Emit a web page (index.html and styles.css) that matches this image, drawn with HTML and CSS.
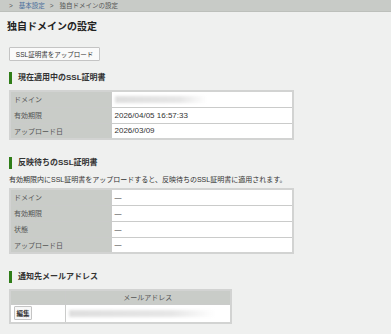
FILE: index.html
```html
<!DOCTYPE html>
<html lang="ja">
<head>
    <meta charset="UTF-8">
    <meta name="viewport" content="width=device-width, initial-scale=1.0">
    <title>独自ドメインの設定</title>
    <link rel="stylesheet" href="styles.css">
</head>
<body>

    <!-- パンくず -->
    <div class="breadcrumb">
        <span class="sep">&gt;</span><a href="#">基本設定</a><span class="sep">&gt;</span>独自ドメインの設定
    </div>

    <div class="content">
        <h1>独自ドメインの設定</h1>

        <button class="btn">SSL証明書をアップロード</button>

        <!-- 現在の証明書 -->
        <h3>現在適用中のSSL証明書</h3>
        <table class="info">
            <tr>
                <th>ドメイン</th>
                <td><span class="masked domain"></span></td>
            </tr>
            <tr>
                <th>有効期限</th>
                <td class="num">2026/04/05 16:57:33</td>
            </tr>
            <tr>
                <th>アップロード日</th>
                <td class="num">2026/03/09</td>
            </tr>
        </table>

        <!-- 反映待ち -->
        <h3 class="second">反映待ちのSSL証明書</h3>
        <p class="note">有効期限内にSSL証明書をアップロードすると、反映待ちのSSL証明書に適用されます。</p>
        <table class="info">
            <tr>
                <th>ドメイン</th>
                <td>—</td>
            </tr>
            <tr>
                <th>有効期限</th>
                <td>—</td>
            </tr>
            <tr>
                <th>状態</th>
                <td>—</td>
            </tr>
            <tr>
                <th>アップロード日</th>
                <td>—</td>
            </tr>
        </table>

        <!-- 通知先 -->
        <h3 class="second">通知先メールアドレス</h3>
        <table class="mail">
            <tr>
                <th class="col-edit"></th>
                <th>メールアドレス</th>
            </tr>
            <tr>
                <td><button class="btn small">編集</button></td>
                <td><span class="masked email"></span></td>
            </tr>
        </table>
    </div>

</body>
</html>
```

FILE: styles.css
```css
* {
    margin: 0;
    padding: 0;
    box-sizing: border-box;
    font-family: "Liberation Sans", "Noto Sans CJK JP", sans-serif;
}
body {
    background: #eff0ef;
    color: #333;
    font-size: 7px;
}
.breadcrumb {
    height: 12px;
    line-height: 11px;
    background: #c8cbc7;
    border-bottom: 1px solid #bcbfbb;
    padding-left: 9px;
    font-size: 6.5px;
    color: #555;
}
.breadcrumb a {
    color: #4a6f9c;
    text-decoration: none;
}
.breadcrumb .sep {
    margin-right: 6px;
}
.breadcrumb a + .sep {
    margin-left: 5px;
}
.content {
    padding: 0 9px;
}
h1 {
    font-size: 10px;
    line-height: 14px;
    margin: 8px 0 0 -2px;
    color: #222;
}
.btn {
    display: block;
    margin-top: 13px;
    height: 14px;
    width: 91px;
    background: #fafafa;
    border: 1px solid #c4c4c4;
    border-radius: 1px;
    font-size: 6.5px;
    color: #333;
    cursor: pointer;
}
h3 {
    margin-top: 11px;
    height: 12px;
    line-height: 12px;
    border-left: 3px solid #2f7d18;
    padding-left: 6px;
    font-size: 8px;
    color: #333;
}
h3.second {
    margin-top: 17px;
}
.note {
    margin-top: 5px;
    line-height: 12px;
    margin-bottom: 2px;
}
table {
    border-collapse: collapse;
    border: 2px solid #d2d3d2;
    background: #fff;
}
.info {
    margin-top: 6px;
    width: 285px;
}
.note + .info {
    margin-top: 2px;
}
th, td {
    border: 1px solid #cacbca;
    height: 16px;
    padding: 0 3px;
    text-align: left;
    font-weight: normal;
}
.info th {
    width: 101px;
    background: #c9ccc8;
    color: #555;
}
.info td.num {
    font-size: 8px;
}
.masked {
    display: inline-block;
    height: 7px;
    vertical-align: middle;
    background: linear-gradient(90deg, #dedede, #e6e6e6 70%, #fff);
    filter: blur(1.5px);
}
.masked.domain {
    width: 92px;
}
.masked.email {
    width: 146px;
}
.mail {
    margin-top: 6px;
    width: 223px;
}
.mail th {
    height: 14px;
    background: #c9ccc8;
    color: #555;
    text-align: center;
}
.mail th.col-edit {
    width: 55px;
}
.mail td {
    height: 19px;
}
.btn.small {
    margin: 0;
    width: 18px;
    height: 14px;
    padding: 0;
    font-size: 6.5px;
    font-weight: bold;
    background: #f7f7f7;
}
```
